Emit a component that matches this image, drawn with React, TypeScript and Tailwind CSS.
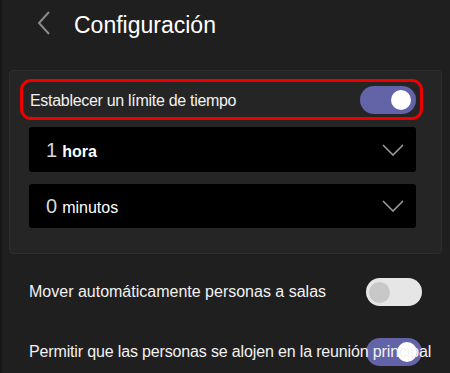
const FONT = "font-['Liberation_Sans',Arial,sans-serif]";

function Toggle({ on, className = "" }: { on: boolean; className?: string }) {
  return (
    <div
      className={`flex h-[28px] w-[56px] shrink-0 items-center rounded-full ${
        on ? "justify-end bg-[#6264a7] pr-[5px]" : "justify-start bg-[#e6e6e6] pl-[3px]"
      } ${className}`}
    >
      <div
        className={`rounded-full ${
          on ? "h-[20px] w-[20px] bg-white" : "h-[21px] w-[21px] bg-[#c8c8c8]"
        }`}
      />
    </div>
  );
}

function Chevron() {
  return (
    <svg width="22" height="12" viewBox="0 0 22 12" fill="none">
      <path d="M1 1 L11 11 L21 1" stroke="#9a9a9a" strokeWidth="1.6" />
    </svg>
  );
}

function Dropdown({ num, unit, bold, h }: { num: string; unit: string; bold?: boolean; h: string }) {
  return (
    <div className={`ml-[9px] flex w-[387px] items-center justify-between rounded-[3px] bg-black pl-[17px] pr-[12px] ${h}`}>
      <div className="flex items-baseline gap-[5px]">
        <span className="text-[20px] font-light text-[#d8d8d8]">{num}</span>
        <span className={`text-[16px] text-white ${bold ? "font-bold" : ""}`}>{unit}</span>
      </div>
      <Chevron />
    </div>
  );
}

export default function App() {
  return (
    <div className={`h-[373px] w-[450px] overflow-hidden border-l-2 border-[#161616] bg-[#1f1f1f] text-white ${FONT}`}>
      <div className="flex h-[44px] items-center pl-[35px] pt-[1px]">
        <svg width="14" height="24" viewBox="0 0 14 24" fill="none">
          <path d="M12 1 L2 12 L12 23" stroke="#8a8a8a" strokeWidth="2" />
        </svg>
        <span className="ml-[23px] mt-[6px] text-[23px] text-white">Configuración</span>
      </div>

      <div className="ml-[7px] mt-[26px] h-[184px] w-[433px] rounded-[4px] border border-[#2e2e2e] bg-[#252525] pl-[10px] pt-[8px]">
        <div className="flex h-[41px] w-[403px] items-center justify-between rounded-[11px] border-[3px] border-[#ee0000] pl-[7px] pr-[4px]">
          <span className="mt-[3px] text-[16px] tracking-[-0.3px] text-[#f2f2f2]">Establecer un límite de tiempo</span>
          <Toggle on />
        </div>
        <div className="mt-[7px] flex flex-col gap-[12px]">
          <Dropdown num="1" unit="hora" bold h="h-[45px]" />
          <Dropdown num="0" unit="minutos" h="h-[44px]" />
        </div>
      </div>

      <div className="mt-[24px] flex items-center justify-between pl-[27px] pr-[28px]">
        <span className="text-[16px] text-[#f2f2f2]">Mover automáticamente personas a salas</span>
        <Toggle on={false} />
      </div>

      <div className="relative mt-[32px] h-[28px] pl-[27px]">
        <Toggle on className="absolute left-[364px] top-[0px]" />
        <span className="relative text-[16px] leading-[28px] tracking-[-0.15px] text-[#f2f2f2]">
          Permitir que las personas se alojen en la reunión principal
        </span>
      </div>
    </div>
  );
}
